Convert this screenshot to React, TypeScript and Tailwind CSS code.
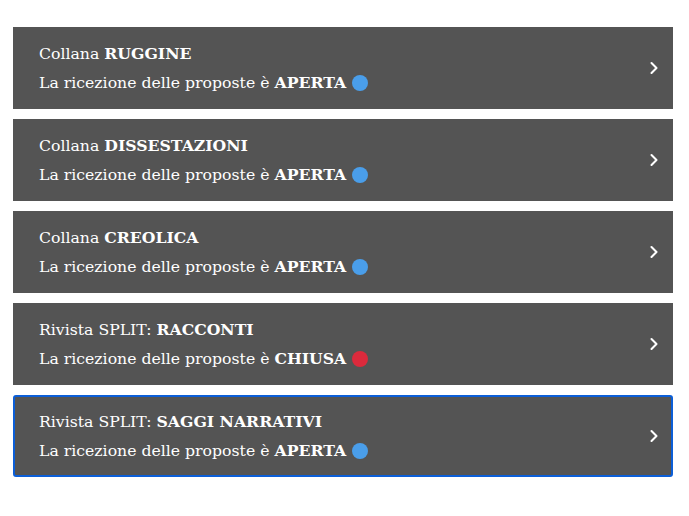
import { ChevronRight } from 'lucide-react';

interface Call {
  prefix: string;
  name: string;
  open: boolean;
}

const calls: Call[] = [
  { prefix: 'Collana', name: 'RUGGINE', open: true },
  { prefix: 'Collana', name: 'DISSESTAZIONI', open: true },
  { prefix: 'Collana', name: 'CREOLICA', open: true },
  { prefix: 'Rivista SPLIT:', name: 'RACCONTI', open: false },
  { prefix: 'Rivista SPLIT:', name: 'SAGGI NARRATIVI', open: true },
];

export default function App() {
  return (
    <div
      className="min-h-screen bg-white pt-[27px] px-[13px]"
      style={{ fontFamily: '"DejaVu Serif", "Liberation Serif", serif' }}
    >
      <div className="flex w-[660px] flex-col gap-[10px]">
        {calls.map((call, i) => {
          const focused = i === calls.length - 1;
          return (
            <div
              key={call.name}
              className={
                focused
                  ? 'flex h-[82px] items-center justify-between rounded-[3px] border-2 border-[#0b5ed7] bg-[#545454] pl-[24px] pr-[7px] text-white'
                  : 'flex h-[82px] items-center justify-between bg-[#545454] pl-[26px] pr-[9px] text-white'
              }
            >
              <div className="flex flex-col gap-[5px] text-[15.7px] leading-[24px]">
                <div>
                  {call.prefix} <span className="font-bold">{call.name}</span>
                </div>
                <div className="flex items-center">
                  <span>
                    La ricezione delle proposte è{' '}
                    <span className="font-bold">{call.open ? 'APERTA' : 'CHIUSA'}</span>
                  </span>
                  <span
                    className={
                      call.open
                        ? 'ml-[6px] inline-block h-[16px] w-[16px] rounded-full bg-[#4a9eea]'
                        : 'ml-[6px] inline-block h-[16px] w-[16px] rounded-full bg-[#dc2a3c]'
                    }
                  />
                </div>
              </div>
              <ChevronRight className="h-[20px] w-[20px]" strokeWidth={2.5} />
            </div>
          );
        })}
      </div>
    </div>
  );
}
